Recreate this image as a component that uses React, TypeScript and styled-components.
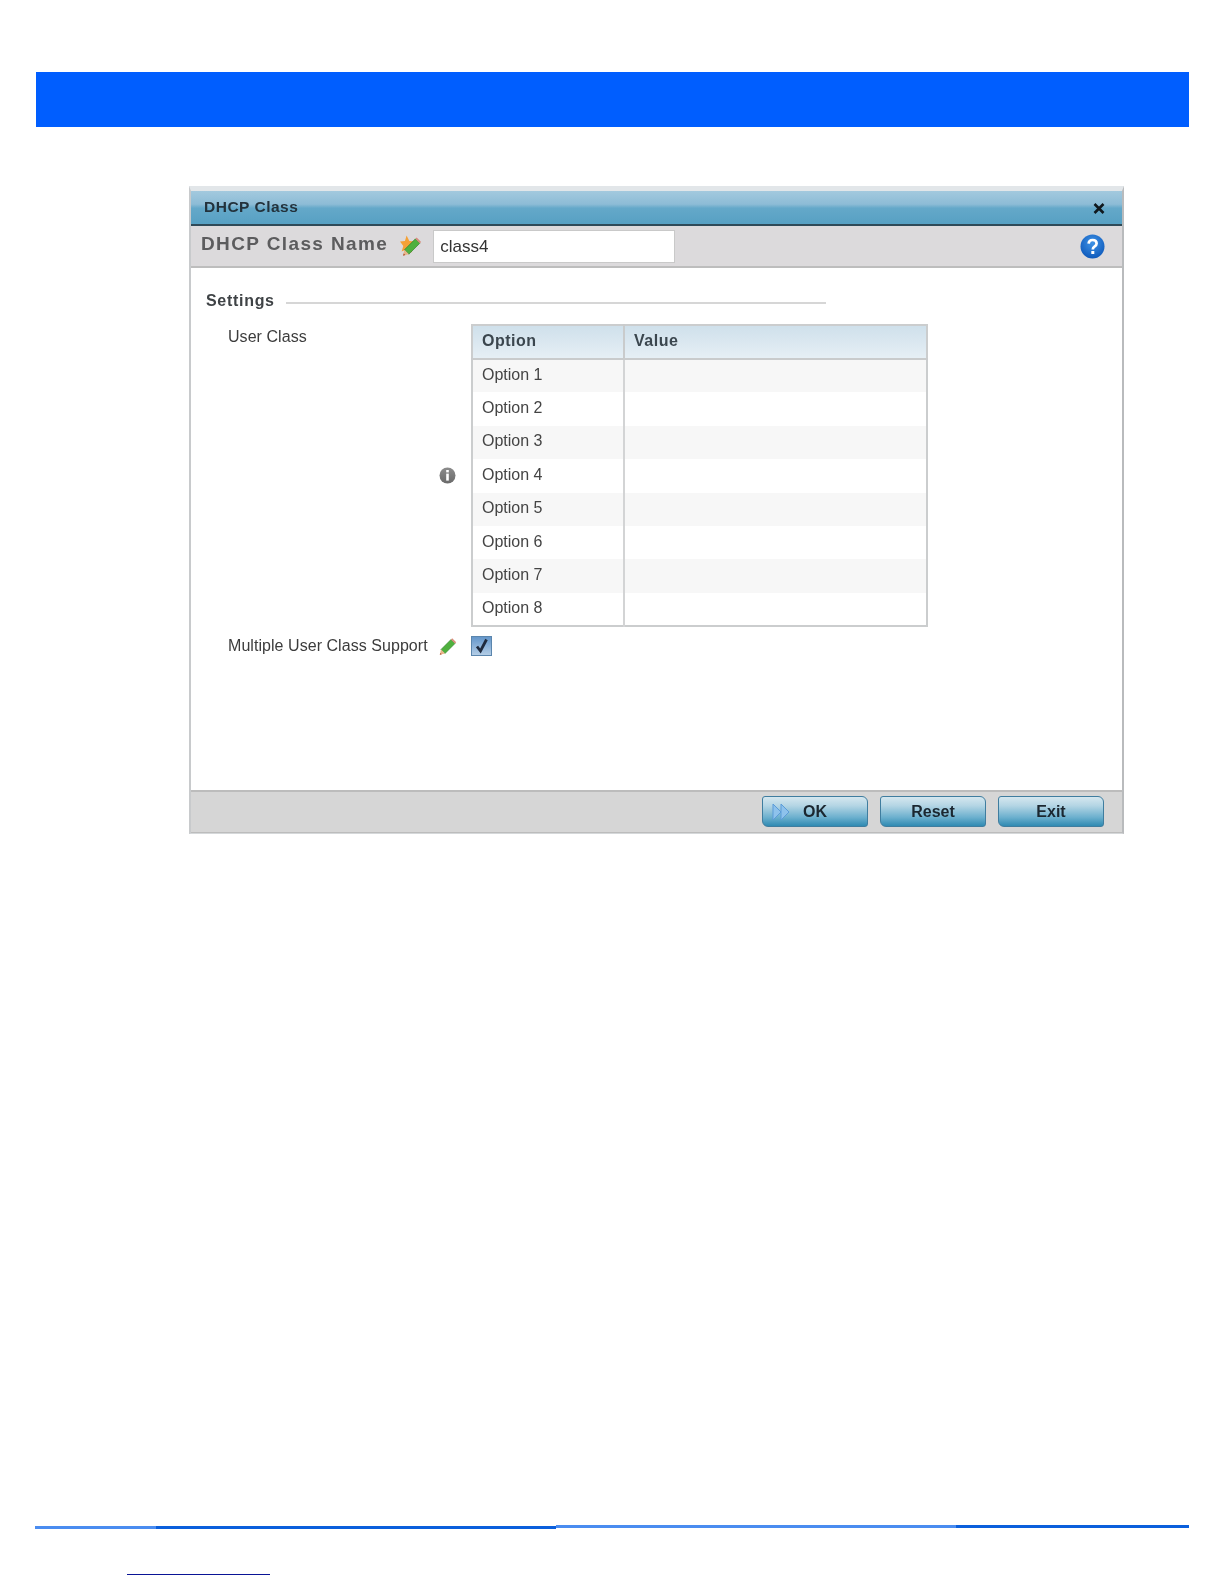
import React from 'react';
import styled, { createGlobalStyle } from 'styled-components';

const GlobalStyle = createGlobalStyle`
  html, body {
    margin: 0;
    padding: 0;
    background: #fff;
    font-family: "Liberation Sans", Arial, sans-serif;
  }
`;

const Page = styled.div`
  width: 1224px;
  height: 1584px;
  padding-top: 72px;
  box-sizing: border-box;
  overflow: hidden;
`;

const Banner = styled.div`
  height: 55px;
  margin: 0 35px 0 36px;
  background: #005eff;
`;

// dialog screenshot
const DialogFrame = styled.div`
  width: 931px;
  height: 642px;
  margin: 59px 0 0 189px;
  border: 2px solid #d5d8da;
  border-bottom-width: 1px;
  border-top-width: 5px;
  border-top-color: #e2e6e9;
  border-left-color: #c8cacc;
  border-right-color: #b9bbbd;
  display: flex;
  flex-direction: column;
  filter: blur(0.5px);
`;

const TitleBar = styled.div`
  height: 35px;
  flex: none;
  box-sizing: border-box;
  padding: 0 17px 0 13px;
  display: flex;
  align-items: center;
  justify-content: space-between;
  background: linear-gradient(180deg, #a3c9de 0%, #8dbcd6 40%, #64a8c9 52%, #57a0c3 100%);
  border-bottom: 2px solid #2f4a58;
`;

const TitleText = styled.span`
  font-size: 15.5px;
  font-weight: 700;
  letter-spacing: 0.5px;
  color: #23323c;
  margin-top: -2px;
`;

const NameBar = styled.div`
  height: 42px;
  flex: none;
  box-sizing: border-box;
  padding: 0 17px 0 10px;
  display: flex;
  align-items: center;
  background: #dcdadc;
  border-bottom: 2px solid #bdbdbd;
`;

const NameLabel = styled.span`
  font-size: 19px;
  font-weight: 700;
  letter-spacing: 1.38px;
  color: #5c5c5e;
  margin-top: -4px;
`;

const IconWrap = styled.span<{ $left?: number }>`
  display: flex;
  margin-left: ${p => p.$left ?? 0}px;
`;

const PushRight = styled.span`
  display: flex;
  margin-left: auto;
`;

const NameInput = styled.div`
  width: 242px;
  height: 33px;
  box-sizing: border-box;
  margin-left: 11px;
  padding: 2px 0 0 6px;
  display: flex;
  align-items: center;
  background: #fff;
  border: 1px solid #c9c9c9;
  font-size: 17px;
  color: #333;
`;

const Body = styled.div`
  flex: 1;
  background: #fff;
  padding: 24px 0 0 15px;
`;

const SectionHead = styled.div`
  display: flex;
  align-items: center;
  width: 620px;
  gap: 11px;
`;

const SectionTitle = styled.span`
  font-size: 16px;
  font-weight: 700;
  letter-spacing: 0.7px;
  color: #3f4346;
`;

const SectionRule = styled.div`
  flex: 1;
  height: 2px;
  margin-top: 4px;
  background: #d6d6d6;
`;

const FormRow = styled.div<{ $top?: number }>`
  display: flex;
  margin-top: ${p => p.$top ?? 0}px;
  padding-left: 22px;
`;

const FieldLabel = styled.div<{ $top?: number }>`
  width: 200px;
  flex: none;
  font-size: 16px;
  letter-spacing: 0.05px;
  color: #3c3c3c;
  padding-top: ${p => p.$top ?? 0}px;
`;

const IconSlot = styled.div`
  width: 43px;
  flex: none;
  display: flex;
  align-items: center;
  justify-content: center;
  padding-right: 5px;
  box-sizing: border-box;
`;

const OptionTable = styled.table`
  width: 457px;
  height: 303px;
  border-collapse: collapse;
  table-layout: fixed;
  border: 2px solid #cbcdce;
`;

const HeadCell = styled.th<{ $width?: number }>`
  height: 34px;
  padding: 0 0 2px 9px;
  box-sizing: border-box;
  width: ${p => (p.$width ? `${p.$width}px` : 'auto')};
  text-align: left;
  font-size: 16px;
  font-weight: 700;
  letter-spacing: 0.5px;
  color: #3b464e;
  background: linear-gradient(180deg, #cfe0eb 0%, #e6eff5 100%);
  border-right: 2px solid #c9cbcc;
  border-bottom: 2px solid #c9cbcc;
  &:last-child {
    border-right: 0;
  }
`;

const BodyRow = styled.tr<{ $striped: boolean }>`
  background: ${p => (p.$striped ? '#f7f7f7' : '#fff')};
`;

const BodyCell = styled.td`
  height: 33px;
  box-sizing: border-box;
  padding: 0 0 2px 9px;
  font-size: 16px;
  color: #444;
  border-right: 2px solid #d3d4d5;
  &:last-child {
    border-right: 0;
  }
`;

const CheckBox = styled.div`
  width: 21px;
  height: 20px;
  box-sizing: border-box;
  display: flex;
  align-items: center;
  justify-content: center;
  background: linear-gradient(180deg, #6496ca 0%, #b3cde6 100%);
  border: 1px solid #5b86ad;
`;

const FooterBar = styled.div`
  height: 43px;
  flex: none;
  box-sizing: border-box;
  padding: 4px 18px 0 0;
  display: flex;
  justify-content: flex-end;
  gap: 12px;
  background: #d6d6d6;
  border-top: 2px solid #bcbcbc;
  border-bottom: 1px solid #bcbcbc;
`;

const ActionButton = styled.div`
  position: relative;
  width: 106px;
  height: 31px;
  box-sizing: border-box;
  display: flex;
  align-items: center;
  justify-content: center;
  border: 1px solid #3f7d9f;
  border-radius: 3px 6px 3px 6px;
  background: linear-gradient(180deg, #d5e7ef 0%, #b4d5e4 30%, #6cb0ce 70%, #2f8ab2 100%);
  font-size: 16px;
  font-weight: 700;
  color: #1b2730;
`;

const OkGlyph = styled.svg`
  position: absolute;
  left: 9px;
  top: 6px;
`;

const FooterRule = styled.div`
  display: flex;
  align-items: flex-start;
  height: 5px;
  margin: 692px 35px 0 35px;
`;

const RuleSegment = styled.div<{ $width: number; $top: number; $soft?: boolean }>`
  width: ${p => p.$width}px;
  height: 3px;
  margin-top: ${p => p.$top}px;
  background: ${p => (p.$soft ? '#4a8cf0' : '#0a5fdc')};
`;

const PageLink = styled.div`
  width: 143px;
  height: 1px;
  margin: 43px 0 0 127px;
  background: #0a1496;
`;

const CloseGlyph = styled.svg`
  margin-top: 1px;
`;

const PencilIcon = ({ star, size = 20 }: { star?: boolean; size?: number }) => (
  <svg width={size} height={size} viewBox="0 0 20 20">
    {star && (
      <path d="M6 0.5 8.5 5.5 14 6 10 10 11 16 6 13 1.5 15 3 10 0 6 4.5 5.5Z" fill="#f4a136" />
    )}
    <path d="M4 13.5 14 3.5 18 7.5 8 17.5Z" fill="#4fb03e" stroke="#2f7f28" strokeWidth="0.6" />
    <path d="M14 3.5 15.2 2.3 19.2 6.3 18 7.5Z" fill="#d98a7a" />
    <path d="M4 13.5 8 17.5 2.8 18.8Z" fill="#e9b58a" />
    <path d="M2.8 18.8 3.4 16.9 4.8 18.2Z" fill="#a8452e" />
  </svg>
);

const InfoIcon = () => (
  <svg width="17" height="17" viewBox="0 0 17 17">
    <defs>
      <linearGradient id="infoFill" x1="0" y1="0" x2="0" y2="1">
        <stop offset="0%" stopColor="#8c8c8c" />
        <stop offset="100%" stopColor="#6a6a6a" />
      </linearGradient>
    </defs>
    <circle cx="8.5" cy="8.5" r="8" fill="url(#infoFill)" />
    <rect x="7.2" y="3" width="2.6" height="2.4" fill="#fff" />
    <rect x="7.2" y="6.6" width="2.6" height="7" fill="#fff" />
  </svg>
);

const HelpIcon = () => (
  <svg width="25" height="25" viewBox="0 0 25 25">
    <defs>
      <radialGradient id="helpFill" cx="50%" cy="35%" r="70%">
        <stop offset="0%" stopColor="#3f93e6" />
        <stop offset="100%" stopColor="#0b55b8" />
      </radialGradient>
    </defs>
    <circle cx="12.5" cy="12.5" r="12" fill="url(#helpFill)" />
    <path d="M8.6 9.6C8.8 7.3 10.4 6 12.6 6 15 6 16.6 7.4 16.6 9.4 16.6 11 15.7 11.8 14.4 12.7 13.3 13.4 12.8 14 12.8 15.4" fill="none" stroke="#fff" strokeWidth="2.7" />
    <rect x="11.3" y="17" width="3" height="3" fill="#fff" />
  </svg>
);

const CloseIcon = () => (
  <CloseGlyph width="12" height="11" viewBox="0 0 12 11">
    <path d="M1.5 1 10.5 10M10.5 1 1.5 10" stroke="#10181d" strokeWidth="2.6" />
  </CloseGlyph>
);

const options = ['Option 1', 'Option 2', 'Option 3', 'Option 4', 'Option 5', 'Option 6', 'Option 7', 'Option 8'];

const ruleSegments = [
  { width: 121, top: 0, soft: true },
  { width: 200, top: 0 },
  { width: 200, top: 0 },
  { width: 200, top: -1, soft: true },
  { width: 200, top: -1, soft: true },
  { width: 199, top: -1 },
  { width: 34, top: -1 },
];

export default function App() {
  return (
    <Page>
      <GlobalStyle />
      <Banner />

      <DialogFrame>
        <TitleBar>
          <TitleText>DHCP Class</TitleText>
          <CloseIcon />
        </TitleBar>

        <NameBar>
          <NameLabel>DHCP Class Name</NameLabel>
          <IconWrap $left={12}>
            <PencilIcon star size={22} />
          </IconWrap>
          <NameInput>class4</NameInput>
          <PushRight>
            <HelpIcon />
          </PushRight>
        </NameBar>

        <Body>
          <SectionHead>
            <SectionTitle>Settings</SectionTitle>
            <SectionRule />
          </SectionHead>

          <FormRow $top={14}>
            <FieldLabel $top={4}>User Class</FieldLabel>
            <IconSlot>
              <InfoIcon />
            </IconSlot>
            <OptionTable>
              <thead>
                <tr>
                  <HeadCell $width={152}>Option</HeadCell>
                  <HeadCell>Value</HeadCell>
                </tr>
              </thead>
              <tbody>
                {options.map((name, i) => (
                  <BodyRow key={name} $striped={i % 2 === 0}>
                    <BodyCell>{name}</BodyCell>
                    <BodyCell />
                  </BodyRow>
                ))}
              </tbody>
            </OptionTable>
          </FormRow>

          <FormRow $top={9}>
            <FieldLabel $top={1}>Multiple User Class Support</FieldLabel>
            <IconSlot>
              <PencilIcon />
            </IconSlot>
            <CheckBox>
              <svg width="15" height="16" viewBox="0 0 15 16">
                <path d="M3 8.5 6.5 13 12.5 1.5" fill="none" stroke="#1f2a3d" strokeWidth="2.8" />
              </svg>
            </CheckBox>
          </FormRow>
        </Body>

        <FooterBar>
          <ActionButton>
            <OkGlyph width="20" height="18" viewBox="0 0 20 18">
              <path d="M1 1 9 9 1 17ZM9 1 17 9 9 17Z" fill="#8ec2ec" stroke="#5b9bd8" strokeWidth="1" />
            </OkGlyph>
            OK
          </ActionButton>
          <ActionButton>Reset</ActionButton>
          <ActionButton>Exit</ActionButton>
        </FooterBar>
      </DialogFrame>

      <FooterRule>
        {ruleSegments.map((s, i) => (
          <RuleSegment key={i} $width={s.width} $top={s.top} $soft={s.soft} />
        ))}
      </FooterRule>
      <PageLink />
    </Page>
  );
}
